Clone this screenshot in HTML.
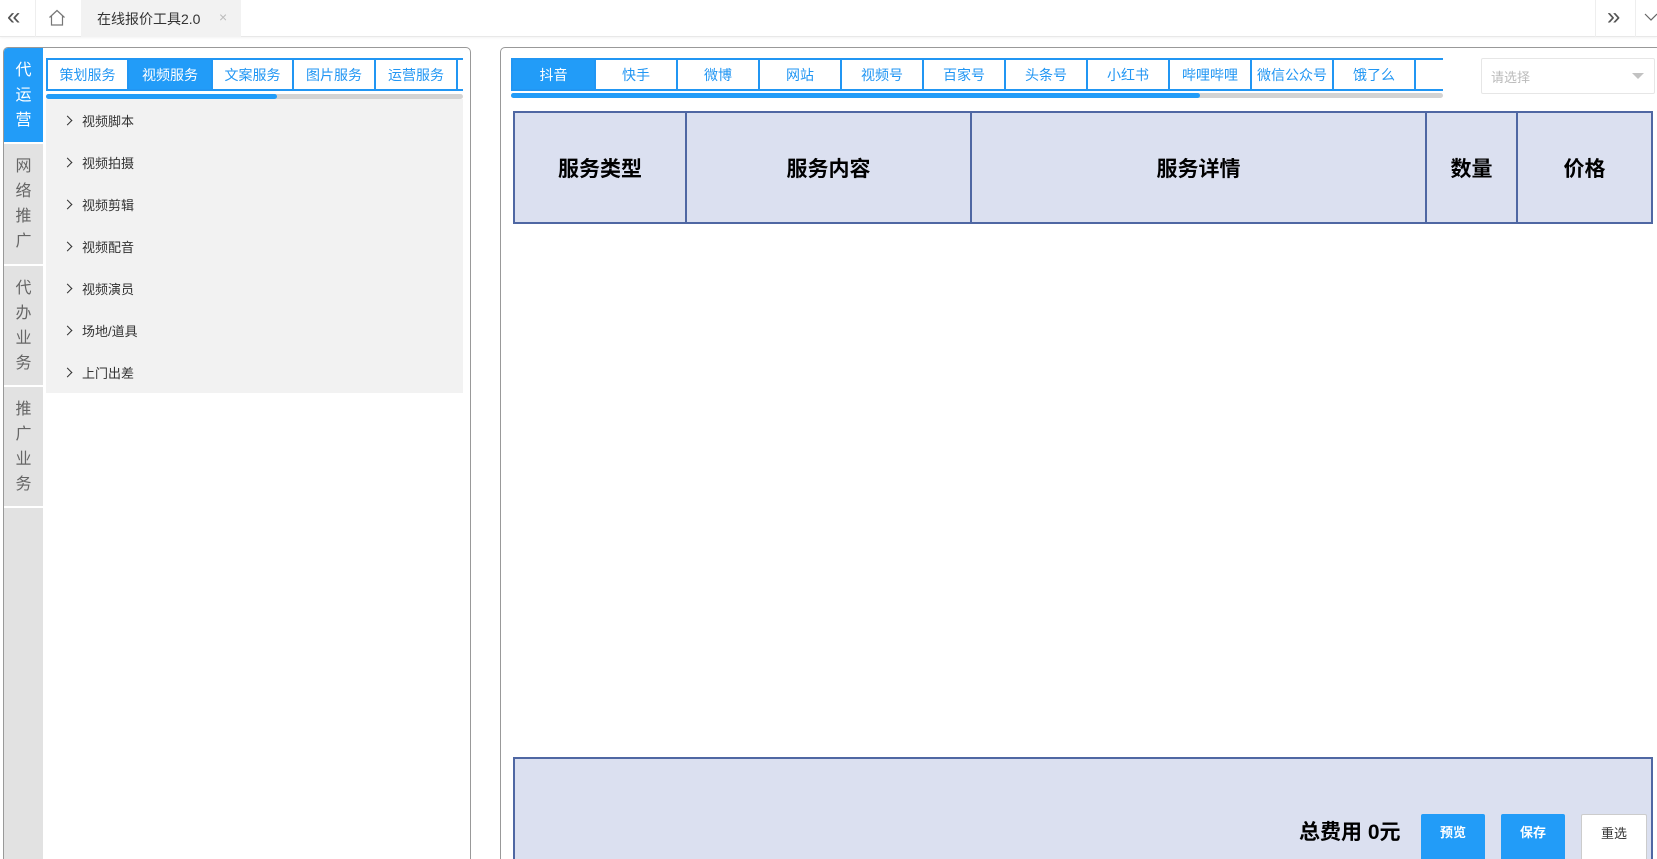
<!DOCTYPE html>
<html><head><meta charset="utf-8"><style>
*{box-sizing:border-box;margin:0;padding:0}
html,body{width:1657px;height:859px;overflow:hidden;background:#fff}
body{font-family:"Liberation Sans","Noto Sans CJK SC",sans-serif;color:#333}
#wrap{position:relative;width:1657px;height:859px;overflow:hidden}
.abs{position:absolute}
.hdr{left:0;top:0;width:1657px;height:37px;border-bottom:1px solid #e8e8e8;box-shadow:0 1px 2px rgba(0,0,0,.05)}
.tab{display:flex;align-items:center;justify-content:center;color:#2196f3;font-size:14px;border-right:2px solid #2196f3;height:32px}
.tabs{display:flex;border-top:2px solid #2196f3;border-bottom:2px solid #2196f3;border-left:2px solid #2196f3;overflow:hidden}
.tab.on{background:#229cf8;color:#fff}
.menu div{height:42px;display:flex;align-items:center;font-size:13px;color:#333;padding-left:18px}
.menu span.ar{display:inline-block;width:7px;height:7px;border-right:1.3px solid #333;border-top:1.3px solid #333;transform:rotate(45deg);margin-right:11px}
.side div{border-bottom:2px solid #fff;display:flex;flex-direction:column;align-items:center;justify-content:center;font-size:16px;line-height:25px;color:#666}
th{font-size:21px;font-weight:bold;color:#000;border:2px solid #4f67a3;background:#dbe0f0}
.btn{top:814px;width:64px;height:60px;padding-top:11px;line-height:16px;text-align:center;font-size:13px;font-weight:bold;color:#fff;background:#229cf8;border-radius:2px}
</style></head><body><div id="wrap">
<div class="abs hdr"></div>
<div class="abs" style="left:7px;top:4px;font-size:24px;color:#555;line-height:26px">«</div>
<div class="abs" style="left:35px;top:0;width:1px;height:37px;background:#eee"></div>
<svg class="abs" style="left:48px;top:9px" width="18" height="17" viewBox="0 0 18 17"><path d="M1.5 8.5L9 1.5l7.5 7M3.5 7v9h11V7" fill="none" stroke="#777" stroke-width="1.2"/></svg>
<div class="abs" style="left:81px;top:0;width:160px;height:37px;background:#f2f2f2"></div>
<div class="abs" style="left:97px;top:9px;font-size:14px;color:#333">在线报价工具2.0</div>
<div class="abs" style="left:219px;top:9px;font-size:14px;color:#bbb">×</div>
<div class="abs" style="left:1595px;top:0;width:1px;height:37px;background:#eee"></div>
<div class="abs" style="left:1635px;top:0;width:1px;height:37px;background:#eee"></div>
<div class="abs" style="left:1607px;top:4px;font-size:24px;color:#555;line-height:26px">»</div>
<svg class="abs" style="left:1644px;top:12px" width="13" height="10"><path d="M1 2l6 6 6-6" fill="none" stroke="#666" stroke-width="1.2"/></svg>

<div class="abs" style="left:3px;top:47px;width:468px;height:900px;border:1.5px solid #999;border-radius:5px;overflow:hidden">
 <div class="abs side" style="left:0;top:0;width:39px;height:900px;background:#e2e2e2">
  <div style="height:96px;background:#229cf8;color:#fff">代<br>运<br>营</div>
  <div style="height:122px">网<br>络<br>推<br>广</div>
  <div style="height:121px">代<br>办<br>业<br>务</div>
  <div style="height:121px">推<br>广<br>业<br>务</div>
 </div>
</div>
<div class="abs tabs" style="left:46px;top:58px;width:417px;height:33px">
 <div class="tab" style="width:81px;height:29px">策划服务</div>
 <div class="tab on" style="width:84px;height:29px">视频服务</div>
 <div class="tab" style="width:81px;height:29px">文案服务</div>
 <div class="tab" style="width:82px;height:29px">图片服务</div>
 <div class="tab" style="width:82px;height:29px">运营服务</div>
</div>
<div class="abs" style="left:46px;top:94px;width:417px;height:5px;background:#d3d3d3;border-radius:3px"></div>
<div class="abs" style="left:46px;top:94px;width:231px;height:5px;background:#229cf8;border-radius:3px"></div>
<div class="abs menu" style="left:46px;top:99px;width:417px;height:294px;background:#f2f2f2">
 <div><span class="ar"></span>视频脚本</div><div><span class="ar"></span>视频拍摄</div><div><span class="ar"></span>视频剪辑</div><div><span class="ar"></span>视频配音</div><div><span class="ar"></span>视频演员</div><div><span class="ar"></span>场地/道具</div><div><span class="ar"></span>上门出差</div>
</div>

<div class="abs" style="left:500px;top:47px;width:1180px;height:900px;border:1.5px solid #999;border-radius:5px"></div>
<div class="abs tabs" style="left:511px;top:58px;width:932px;height:33px">
 <div class="tab on" style="width:83px;min-width:83px;height:29px">抖音</div>
 <div class="tab" style="width:82px;min-width:82px;height:29px">快手</div>
 <div class="tab" style="width:82px;min-width:82px;height:29px">微博</div>
 <div class="tab" style="width:82px;min-width:82px;height:29px">网站</div>
 <div class="tab" style="width:82px;min-width:82px;height:29px">视频号</div>
 <div class="tab" style="width:82px;min-width:82px;height:29px">百家号</div>
 <div class="tab" style="width:82px;min-width:82px;height:29px">头条号</div>
 <div class="tab" style="width:82px;min-width:82px;height:29px">小红书</div>
 <div class="tab" style="width:82px;min-width:82px;height:29px">哔哩哔哩</div>
 <div class="tab" style="width:82px;min-width:82px;height:29px">微信公众号</div>
 <div class="tab" style="width:82px;min-width:82px;height:29px">饿了么</div>
 <div class="tab" style="width:82px;min-width:82px;height:29px;border-right:none">美团</div>
</div>
<div class="abs" style="left:511px;top:93px;width:932px;height:5px;background:#d3d3d3;border-radius:3px"></div>
<div class="abs" style="left:511px;top:93px;width:689px;height:5px;background:#229cf8;border-radius:3px"></div>
<div class="abs" style="left:1481px;top:58px;width:174px;height:36px;border:1px solid #e6e6e6;border-radius:2px"></div>
<div class="abs" style="left:1491px;top:67px;font-size:13px;color:#bbb">请选择</div>
<div class="abs" style="left:1632px;top:73px;width:0;height:0;border-left:6px solid transparent;border-right:6px solid transparent;border-top:6px solid #c2c2c2"></div>

<table class="abs" style="left:513px;top:111px;width:1140px;height:113px;border-collapse:collapse">
<tr><th style="width:172px">服务类型</th><th style="width:285px">服务内容</th><th style="width:455px">服务详情</th><th style="width:91px">数量</th><th>价格</th></tr>
</table>

<div class="abs" style="left:513px;top:757px;width:1140px;height:130px;border:2px solid #4f67a3;background:#dbe0f0"></div>
<div class="abs" style="left:1299px;top:816px;font-size:21px;font-weight:bold;color:#000">总费用 0元</div>
<div class="abs btn" style="left:1421px">预览</div>
<div class="abs btn" style="left:1501px">保存</div>
<div class="abs btn" style="left:1581px;width:66px;background:#fff;color:#333;border:1px solid #ccc;font-weight:normal">重选</div>
</div></body></html>
